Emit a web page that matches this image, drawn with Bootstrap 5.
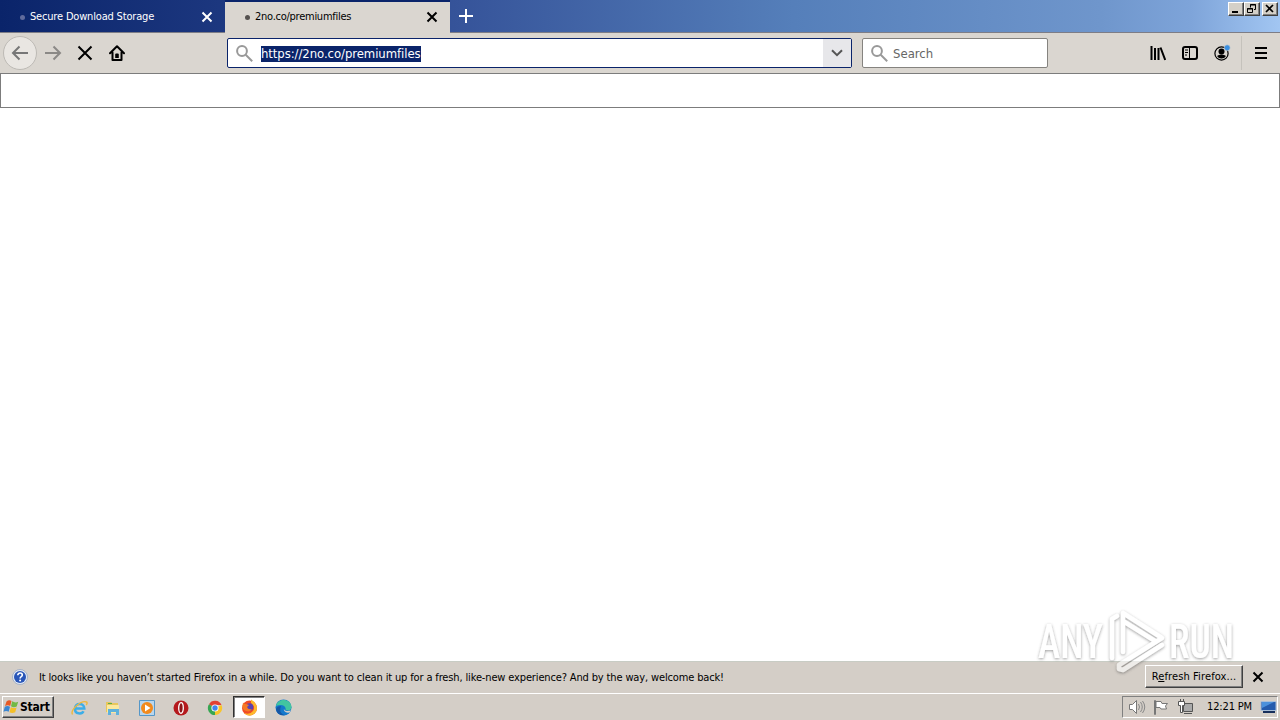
<!DOCTYPE html>
<html lang="en">
<head>
  <meta charset="UTF-8" />
  <meta name="viewport" content="width=device-width, initial-scale=1.0"/>
  <title>2no.co/premiumfiles</title>
  <link href="https://cdn.jsdelivr.net/npm/bootstrap@5.3.3/dist/css/bootstrap.min.css" rel="stylesheet">
  <style>
    body { height: 720px; overflow: hidden; font-family: "DejaVu Sans Condensed", "DejaVu Sans", sans-serif; font-stretch: condensed; font-size: 11px; line-height: 14px; color: #000; background: #fff; }
    svg { display: block; flex: none; }
    .line { fill: none; stroke: currentColor; stroke-width: 2; }
    .tabstrip { height: 33px; border-bottom: 1px solid #7d7d86; background: linear-gradient(90deg, #0a246a 0%, #1d3880 18%, #36549a 36%, #557fba 62%, #6f96cc 86%, #7ea4d9 93%, #a2c6f2 100%); }
    .browser-tab { width: 225px; padding: 2px 11px 0 20px; letter-spacing: -.18px; }
    .browser-tab.current { height: 33px; background: #dad6d0; border-top: 2px solid #0a246a; padding-top: 0; padding-bottom: 1px; letter-spacing: -.26px; }
    .dot { width: 5px; height: 5px; border-radius: 50%; background: #606b9c; margin-right: 5px; }
    .current .dot { background: #55514f; }
    .win-buttons { padding: 2px 2px 0 0; }
    .win-btn { width: 16px; height: 14px; background: #d4d0c8; border: 1px solid; border-color: #fff #404040 #404040 #fff; box-shadow: inset -1px -1px #808080; }
    .close-btn { margin-left: 2px; }
    .toolbar { height: 40px; background: #dad6d0; padding: 0 3px; }
    .tool { width: 32px; height: 34px; display: flex; align-items: center; justify-content: center; }
    .back { width: 34px; border: 1px solid #bdbab5; border-radius: 50%; background: #e9e6e2; color: #777; }
    .forward { color: #8b8986; }
    .menu-tool { width: 35px; padding-left: 2px; }
    .field { height: 30px; background: #fff; border: 1px solid #85837f; border-radius: 2px; font-size: 13px; line-height: 16px; color: #666; }
    .url-field { width: 625px; margin-left: 94px; border-color: #0a246a; }
    .url-text { background: #0a246a; color: #fff; letter-spacing: -.07px; margin: 1px 0 0 8px; width: 160px; white-space: nowrap; }
    .search-text { margin: 1px 0 0 5px; }
    .dropmarker { width: 28px; background: #e7e7ea; color: #555; }
    .search-field { width: 186px; margin-left: 10px; }
    .tool-sep { width: 1px; height: 34px; background: #c5c2bc; margin-left: 3px; }
    .blank-panel { height: 35px; border: 1px solid #7c7c7c; }
    .notice { height: 32px; background: #d4cec7; border-top: 1px solid #c8ccc4; letter-spacing: -.142px; padding: 0 15px 1px 12px; }
    .notice-text { margin: 1px 0 0 11px; }
    .refresh-btn { width: 98px; height: 23px; line-height: 21px; margin-bottom: 1px; border: 1px solid; border-color: #fff #404040 #404040 #fff; box-shadow: inset -1px -1px #808080; background: #d4cec7; letter-spacing: .12px; }
    .taskbar { height: 27px; background: #d4cec7; border-top: 1px solid #fff; padding: 2px 2px 0 2px; }
    .start-btn { width: 52px; height: 22px; border: 1px solid; border-color: #fff #404040 #404040 #fff; box-shadow: inset -1px -1px #808080; font-size: 12px; font-weight: bold; letter-spacing: -.2px; }
    .task { width: 34px; height: 23px; display: flex; align-items: center; justify-content: center; }
    .task.running { width: 32px; height: 22px; margin: 0 1px; background: #fff; border: 1px solid; border-color: #303030 #fff #fff #303030; box-shadow: inset 1px 1px #808080; }
    .tray { width: 156px; height: 22px; border: 1px solid; border-color: #808080 #fff #fff #808080; padding-left: 5px; letter-spacing: -.15px; }
    .watermark { position: absolute; left: 1030px; top: 602px; }
  </style>
</head>
<body class="d-flex flex-column">
  <!-- Tabs -->
  <div class="tabstrip d-flex flex-shrink-0">
    <div class="browser-tab d-flex align-items-center text-white">
      <span class="dot"></span><span class="flex-grow-1">Secure Download Storage</span>
      <svg width="14" height="14" viewBox="0 0 14 14"><path class="line" d="M2.500 2.500l9 9m0-9l-9 9"/></svg>
    </div>
    <div class="browser-tab current d-flex align-items-center">
      <span class="dot"></span><span class="flex-grow-1">2no.co/premiumfiles</span>
      <svg width="14" height="14" viewBox="0 0 14 14"><path class="line" d="M2.500 2.500l9 9m0-9l-9 9"/></svg>
    </div>
    <div class="d-flex align-items-center text-white ps-2">
      <svg width="16" height="16" viewBox="0 0 16 16"><path class="line" d="M8 1v14M1 8h14"/></svg>
    </div>
    <div class="win-buttons d-flex align-items-start ms-auto">
      <div class="win-btn"><svg width="14" height="12"><path d="M3 8h6v2H3z"/></svg></div>
      <div class="win-btn"><svg width="14" height="12"><path fill="none" stroke="#000" d="M5.500 4.500v-3h5v5H9M5 2h6M2.500 5.500h5v4h-5zM2 6h6"/></svg></div>
      <div class="win-btn close-btn"><svg width="14" height="12"><path fill="none" stroke="#000" stroke-width="1.700" d="M3 2l7 7m0-7l-7 7"/></svg></div>
    </div>
  </div>

  <!-- Navigation -->
  <div class="toolbar d-flex align-items-center flex-shrink-0">
    <div class="tool back"><svg width="18" height="16" viewBox="0 0 18 16"><path class="line" d="M17 8H2M8.500 1.500L2 8l6.500 6.500"/></svg></div>
    <div class="tool forward"><svg width="18" height="16" viewBox="0 0 18 16"><path class="line" d="M1 8h15M9.500 1.500L16 8l-6.500 6.500"/></svg></div>
    <div class="tool"><svg width="16" height="16" viewBox="0 0 16 16"><path class="line" d="M1.500 1.500l13 13m0-13l-13 13"/></svg></div>
    <div class="tool"><svg width="16" height="16" viewBox="0 0 16 16"><path class="line" stroke-linejoin="round" stroke-linecap="round" d="M1 8.200L8 1.200l7 7M3.500 7.500V15h9V7.500"/><path d="M6.200 13V9.500q0-1 1-1h1.600q1 0 1 1V13z"/></svg></div>
    <div class="field url-field d-flex align-items-center">
      <svg class="ms-2" width="17" height="17" viewBox="0 0 17 17" color="#999"><circle class="line" cx="6" cy="6" r="4.900"/><path class="line" d="M9.700 9.700l6.500 6.500"/></svg>
      <span class="url-text">https://2no.co/premiumfiles</span>
      <div class="dropmarker d-flex align-items-center justify-content-center h-100 ms-auto"><svg width="12" height="8" viewBox="0 0 12 8"><path class="line" d="M1 1.200l5 5 5-5"/></svg></div>
    </div>
    <div class="field search-field d-flex align-items-center">
      <svg class="ms-2" width="17" height="17" viewBox="0 0 17 17" color="#999"><circle class="line" cx="6" cy="6" r="4.900"/><path class="line" d="M9.700 9.700l6.500 6.500"/></svg>
      <span class="search-text">Search</span>
    </div>
    <div class="d-flex align-items-center ms-auto">
      <div class="tool"><svg width="16" height="16" viewBox="0 0 16 16"><path class="line" d="M1.500 1v14M5 3v12M8.500 3v12M10.500 2.500L15.200 15"/></svg></div>
      <div class="tool"><svg width="16" height="16" viewBox="0 0 16 16"><rect class="line" x="1" y="2" width="14" height="12" rx="2"/><path fill="none" stroke="#000" d="M7.500 2v12M3 5h3M3 7.500h3M3 10h2"/></svg></div>
      <div class="tool"><svg width="18" height="18" viewBox="0 0 18 18"><circle fill="none" stroke="#000" stroke-width="1.200" cx="8.500" cy="9.500" r="6.600"/><circle cx="8.500" cy="7.500" r="3"/><path d="M4 12q1.500-1.500 4.500-1.500T13 12q-1.500 2.500-4.500 2.500T4 12z"/><circle cx="14.200" cy="3.800" r="3" fill="#3b8fe0" stroke="#dad6d0" stroke-width=".6"/></svg></div>
      <div class="tool-sep"></div>
      <div class="tool menu-tool"><svg width="12" height="12" viewBox="0 0 12 12"><path class="line" d="M0 1h12M0 6h12M0 11h12"/></svg></div>
    </div>
  </div>

  <!-- Page -->
  <div class="blank-panel flex-shrink-0"></div>
  <div class="flex-grow-1"></div>

  <!-- Notification -->
  <div class="notice d-flex align-items-center flex-shrink-0">
    <svg width="16" height="16" viewBox="0 0 16 16"><circle cx="8" cy="8" r="7.500" fill="#e4eaf3" stroke="#8c9fbe" stroke-width=".7"/><circle cx="8" cy="8" r="6" fill="#2855b8"/><path d="M5.800 6.200C5.800 3.200 10.300 3.500 10.300 6c0 1.700-2.200 1.500-2.200 3.400" fill="none" stroke="#fff" stroke-width="1.600"/><circle cx="8.100" cy="11.500" r="1" fill="#fff"/></svg>
    <span class="notice-text text-nowrap">It looks like you haven’t started Firefox in a while. Do you want to clean it up for a fresh, like-new experience? And by the way, welcome back!</span>
    <div class="refresh-btn text-center text-nowrap ms-auto me-2">R<u>e</u>fresh Firefox...</div>
    <svg width="14" height="14" viewBox="0 0 14 14"><path class="line" d="M2.500 2.500l9 9m0-9l-9 9"/></svg>
  </div>

  <!-- Taskbar -->
  <div class="taskbar d-flex flex-shrink-0">
    <div class="start-btn d-flex align-items-center">
      <svg width="17" height="16" viewBox="0 0 17 16"><path fill="#e75a25" d="M3.500 2.500Q6 .500 8.500 2L7.200 7Q5 5.500 2 7z"/><path fill="#72b944" d="M9.200 2.300q3 2 6 .4L13.700 7.500q-3 1.400-5.700-.2z"/><path fill="#3b86d1" d="M1.800 7.800q2.700-1.500 5.200 0l-1.300 5Q3.200 11.400.500 12.800z"/><path fill="#f4bf28" d="M7.800 8.200q3 1.500 5.800.2L12.200 13.200q-3 1.600-5.700 0z"/></svg><span>Start</span>
    </div>
    <div class="d-flex ms-2">
      <div class="task"><svg width="17" height="16" viewBox="0 0 17 16"><path d="M4.500 8.500h8.800C13 2.500 4.500 2.500 4 8.500c-.3 6 7 6 8.500 2.800" fill="none" stroke="#3daee8" stroke-width="2.500"/><path d="M1.500 14.500C-1 10 10 0 15.500 2c1 .4.500 2-.3 3" fill="none" stroke="#edb83d" stroke-width="1.400"/></svg></div>
      <div class="task"><svg width="16" height="16" viewBox="0 0 16 16"><path fill="#e8c65c" d="M1 2h5l1 1h6v9H1z"/><path fill="#fbe99e" d="M2 5h12v8H2z"/><path fill="#5eb1dc" d="M3 9h11v6h-3v-3H6v3H3z"/><path fill="#5cad4a" d="M3 3h4v1H3z"/></svg></div>
      <div class="task"><svg width="16" height="16" viewBox="0 0 16 16"><path fill="#b9d6ed" stroke="#5597c8" d="M.5.500h15v15H.500z"/><circle cx="8" cy="8" r="6" fill="#f28a1c"/><path fill="#fff" d="M6 4.500l5.500 3.500L6 11.500z"/></svg></div>
      <div class="task"><svg width="16" height="16" viewBox="0 0 16 16"><circle cx="8" cy="8" r="7.500" fill="#b5191d"/><ellipse cx="8" cy="8" rx="2.300" ry="5.300" fill="#8c1418" stroke="#fff" stroke-width="1.300"/></svg></div>
      <div class="task"><svg width="16" height="16" viewBox="0 0 16 16"><path fill="#e34133" d="M8 8L2 4.200a7 7 0 0 1 12.500.8H8z"/><path fill="#f8c52b" d="M8 8l6.500-3A7 7 0 0 1 8 15z"/><path fill="#37a652" d="M8 8v7A7 7 0 0 1 2 4.200z"/><circle cx="8" cy="8" r="3.600" fill="#fff"/><circle cx="8" cy="8" r="2.700" fill="#4385ee"/></svg></div>
      <div class="task running"><svg width="17" height="17" viewBox="0 0 17 17"><circle cx="8.500" cy="9" r="7.500" fill="#f04b26"/><path fill="#fdb92d" d="M10 .500q5.500 3 6 8.500a7.500 7.500 0 0 1-13 5q6 2 9-2t-2-8z"/><circle cx="8.500" cy="8" r="3.800" fill="#5a43b2"/><path fill="#f57924" d="M2 3.500q1 1.500 3 1.500l3 1-2 2q1 3 5 2-2 3.500-6 2T1.500 7z"/></svg></div>
      <div class="task"><svg width="17" height="17" viewBox="0 0 17 17"><circle cx="8.500" cy="8.500" r="8" fill="#1479cc"/><path fill="#42c5a0" d="M1 7C3-1.500 16-.5 16.500 8c0 4-5 4-6 2.500 1-4-4.500-6-9.500-3.500z"/><path fill="#d4cec7" d="M9 8.500q-1 4.500 7 3l-1.500 2Q8 14.500 9 8.500z"/><path fill="#1657a5" d="M6 7q-3 7 4 9.300Q2 17 1 10q1-3 5-3z"/></svg></div>
    </div>
    <div class="tray d-flex align-items-center ms-auto">
      <svg width="18" height="16" viewBox="0 0 18 16"><path fill="#fff" stroke="#777" d="M1.500 5.500h3l4-4v13l-4-4h-3z"/><path fill="none" stroke="#888" d="M10.500 5q2 3 0 6M12.500 3q3.500 5 0 10M14.500 2q4.500 6 0 12"/></svg>
      <svg class="ms-2" width="16" height="16" viewBox="0 0 16 16"><path fill="#fff" stroke="#777" d="M.500 1.500v14h1v-14zM2 2.500h5l1 2h5.500l-2 2.500 1 3H7l-1-1.500H2z"/></svg>
      <svg class="ms-2" width="17" height="16" viewBox="0 0 17 16"><path fill="#aaa" stroke="#555" d="M5.500 4.500h9v8h-9zM6 14.500h8"/><path fill="#fff" stroke="#555" d="M.500 2.500h6v4h-2v7h-2v-7h-2zM2.500 0v3M5.500 0v3"/></svg>
      <span class="text-nowrap ms-auto">12:21 PM</span>
      <svg class="ms-2" width="17" height="14" viewBox="0 0 17 14"><path fill="#245bad" stroke="#a9bed7" d="M1 1.500h15v9H1z"/><path fill="#4b91dc" d="M2 2h12L2 8z"/><path fill="#172f5c" d="M3 11h12v2H3z"/></svg>
    </div>
  </div>

  <svg class="watermark" width="230" height="76" viewBox="0 0 230 76">
    <defs><filter id="soft" x="-10%" y="-20%" width="120%" height="140%"><feDropShadow dx="0" dy="1" stdDeviation="1.600" flood-color="#444" flood-opacity=".85"/></filter></defs>
    <g filter="url(#soft)" opacity=".62" fill="#fff" font-family="Roboto, sans-serif" font-size="48" font-weight="500">
      <text x="8" y="56" textLength="65" lengthAdjust="spacingAndGlyphs">ANY</text>
      <text x="139" y="56" textLength="65" lengthAdjust="spacingAndGlyphs">RUN</text>
      <path fill="none" stroke="#fff" stroke-width="4.500" stroke-linejoin="round" stroke-linecap="round" d="M82 56V17l5-3M93 50V11l39 25-43 27v4l4 1 39-25M93 19l32 20"/>
    </g>
  </svg>

  <script src="https://cdn.jsdelivr.net/npm/bootstrap@5.3.3/dist/js/bootstrap.bundle.min.js"></script>
</body>
</html>
